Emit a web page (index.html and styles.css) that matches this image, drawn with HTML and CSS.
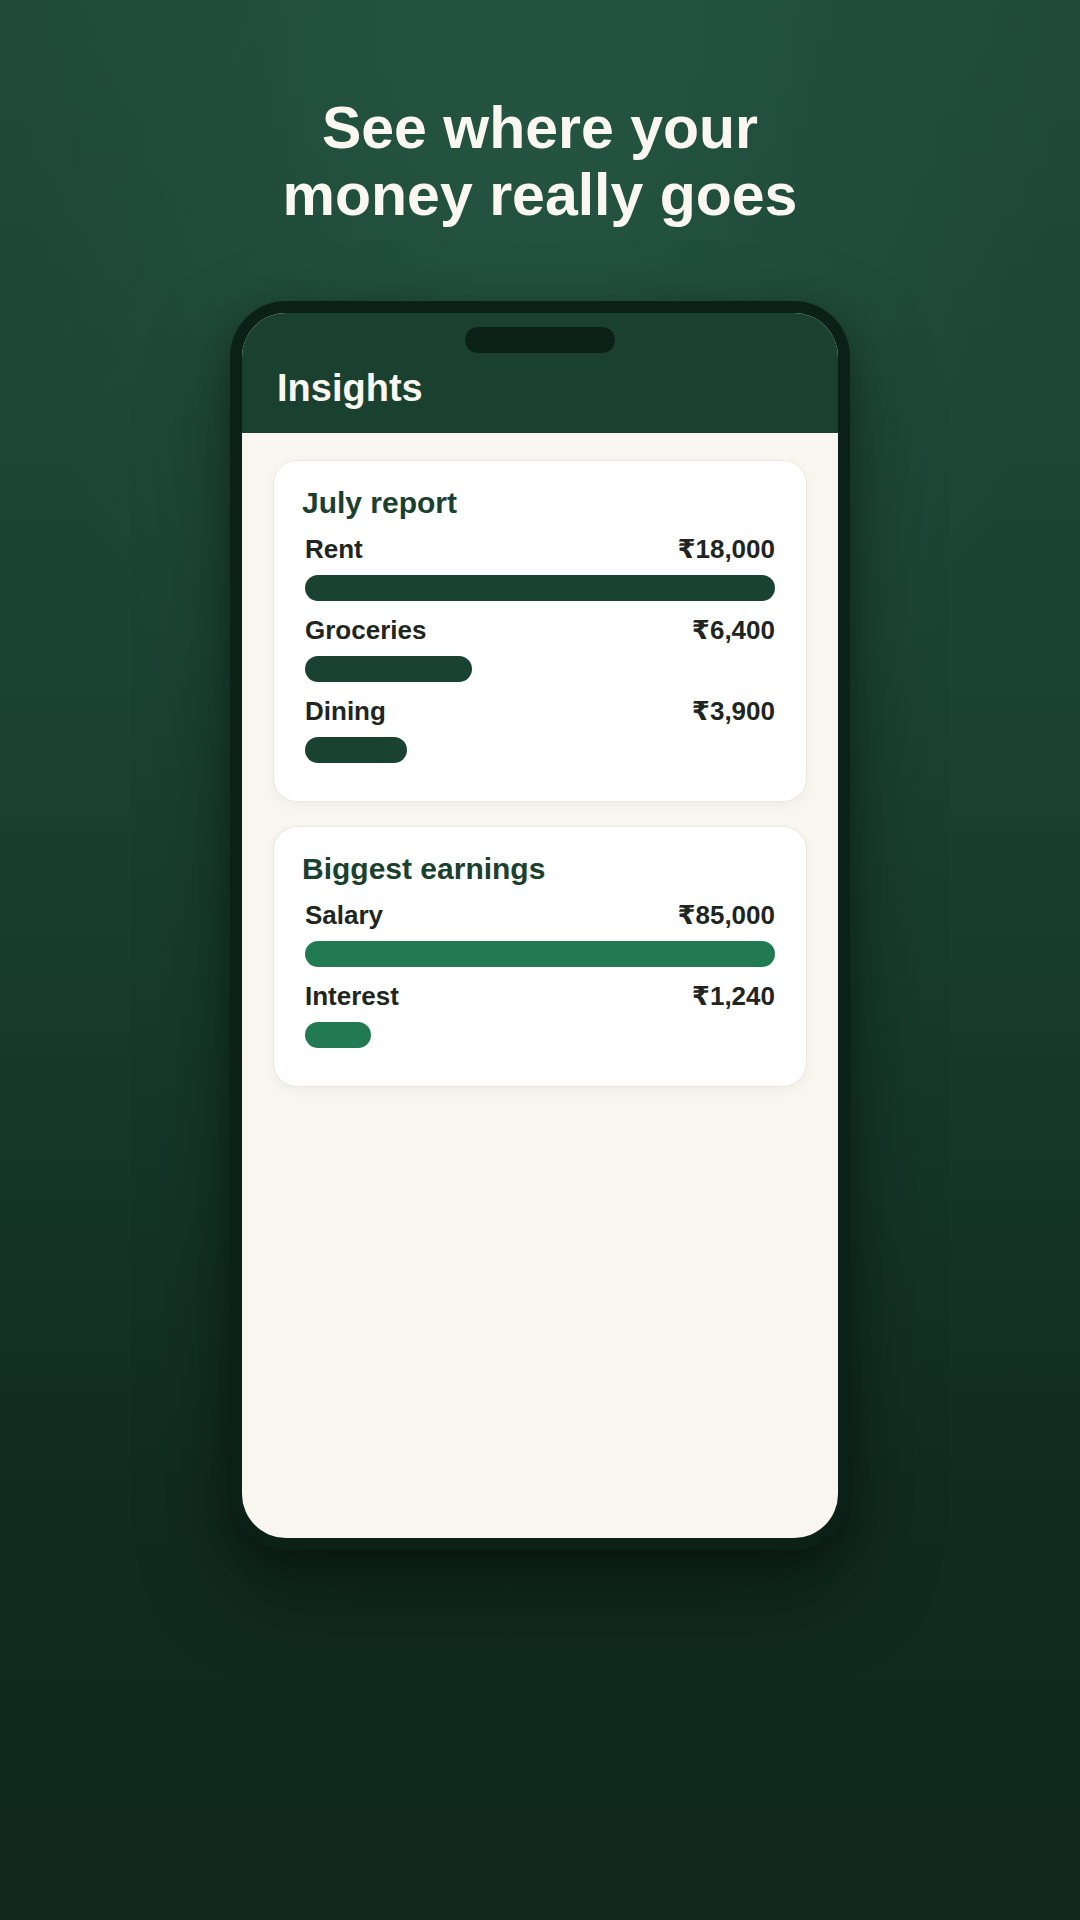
FILE: index.html
```html
<!DOCTYPE html>
<html lang="en">

<head>
    <meta charset="UTF-8">
    <meta name="viewport" content="width=device-width, initial-scale=1.0">
    <title>Insights</title>
    <link rel="stylesheet" href="styles.css">
</head>

<body>
    <h1 class="headline">See where your<br>money really goes</h1>

    <div class="phone">
        <div class="screen">
            <div class="app-header">
                <div class="notch"></div>
                <div class="app-title">Insights</div>
            </div>

            <div class="content">
                <div class="card">
                    <h2>July report</h2>
                    <div class="row">
                        <div class="row-head"><span>Rent</span><span>₹18,000</span></div>
                        <div class="bar spend" style="width: 100%"></div>
                    </div>
                    <div class="row">
                        <div class="row-head"><span>Groceries</span><span>₹6,400</span></div>
                        <div class="bar spend" style="width: 35.6%"></div>
                    </div>
                    <div class="row">
                        <div class="row-head"><span>Dining</span><span>₹3,900</span></div>
                        <div class="bar spend" style="width: 21.7%"></div>
                    </div>
                </div>

                <div class="card">
                    <h2>Biggest earnings</h2>
                    <div class="row">
                        <div class="row-head"><span>Salary</span><span>₹85,000</span></div>
                        <div class="bar earn" style="width: 100%"></div>
                    </div>
                    <div class="row">
                        <div class="row-head"><span>Interest</span><span>₹1,240</span></div>
                        <div class="bar earn" style="width: 14%"></div>
                    </div>
                </div>
            </div>
        </div>
    </div>
</body>

</html>
```

FILE: styles.css
```css
body {
    font-family: "Liberation Sans", Arial, "DejaVu Sans", sans-serif;
    margin: 0;
    padding: 0;
    width: 1080px;
    height: 1920px;
    overflow: hidden;
    display: flex;
    flex-direction: column;
    align-items: center;
    color: #faf7f0;
    background:
        radial-gradient(ellipse 520px 820px at 50% 6%, rgba(42, 96, 74, 0.5), rgba(42, 96, 74, 0) 100%),
        linear-gradient(180deg, #1f4a39 0%, #1b4334 35%, #153628 60%, #112b20 78%, #10281e 100%);
}

.headline {
    margin: 95px 0 0;
    font-size: 59px;
    line-height: 1.14;
    font-weight: bold;
    text-align: center;
    color: #faf7f0;
}

.phone {
    margin-top: 71px;
    width: 620px;
    box-sizing: border-box;
    padding: 12px;
    background: #0b2118;
    border-radius: 56px;
    box-shadow: 0 40px 90px rgba(0, 0, 0, 0.35), 0 10px 30px rgba(0, 0, 0, 0.25);
}

.screen {
    height: 1225px;
    border-radius: 44px;
    overflow: hidden;
    background: #f9f6ef;
    display: flex;
    flex-direction: column;
}

.app-header {
    height: 120px;
    box-sizing: border-box;
    padding: 14px 35px 0;
    background: #1a4030;
    display: flex;
    flex-direction: column;
}

.notch {
    align-self: center;
    width: 150px;
    height: 26px;
    border-radius: 13px;
    background: #0b2118;
}

.app-title {
    margin-top: 13px;
    font-size: 38px;
    line-height: 1.2;
    font-weight: bold;
    color: #faf7f0;
}

.content {
    padding: 27px 31px 0;
    display: flex;
    flex-direction: column;
    gap: 24px;
}

.card {
    background: #fff;
    border: 1px solid #ebe7de;
    border-radius: 24px;
    padding: 24px 28px;
    box-shadow: 0 4px 12px rgba(0, 0, 0, 0.04);
}

.card h2 {
    margin: 0 0 13px;
    font-size: 30px;
    line-height: 1.2;
    font-weight: bold;
    color: #1a4030;
}

.row {
    margin: 0 3px 14px;
}

.row-head {
    display: flex;
    justify-content: space-between;
    font-size: 26px;
    line-height: 31px;
    font-weight: bold;
    color: #1f2622;
}

.bar {
    margin-top: 10px;
    height: 26px;
    border-radius: 13px;
}

.spend {
    background: #1a4232;
}

.earn {
    background: #217a52;
}
```
